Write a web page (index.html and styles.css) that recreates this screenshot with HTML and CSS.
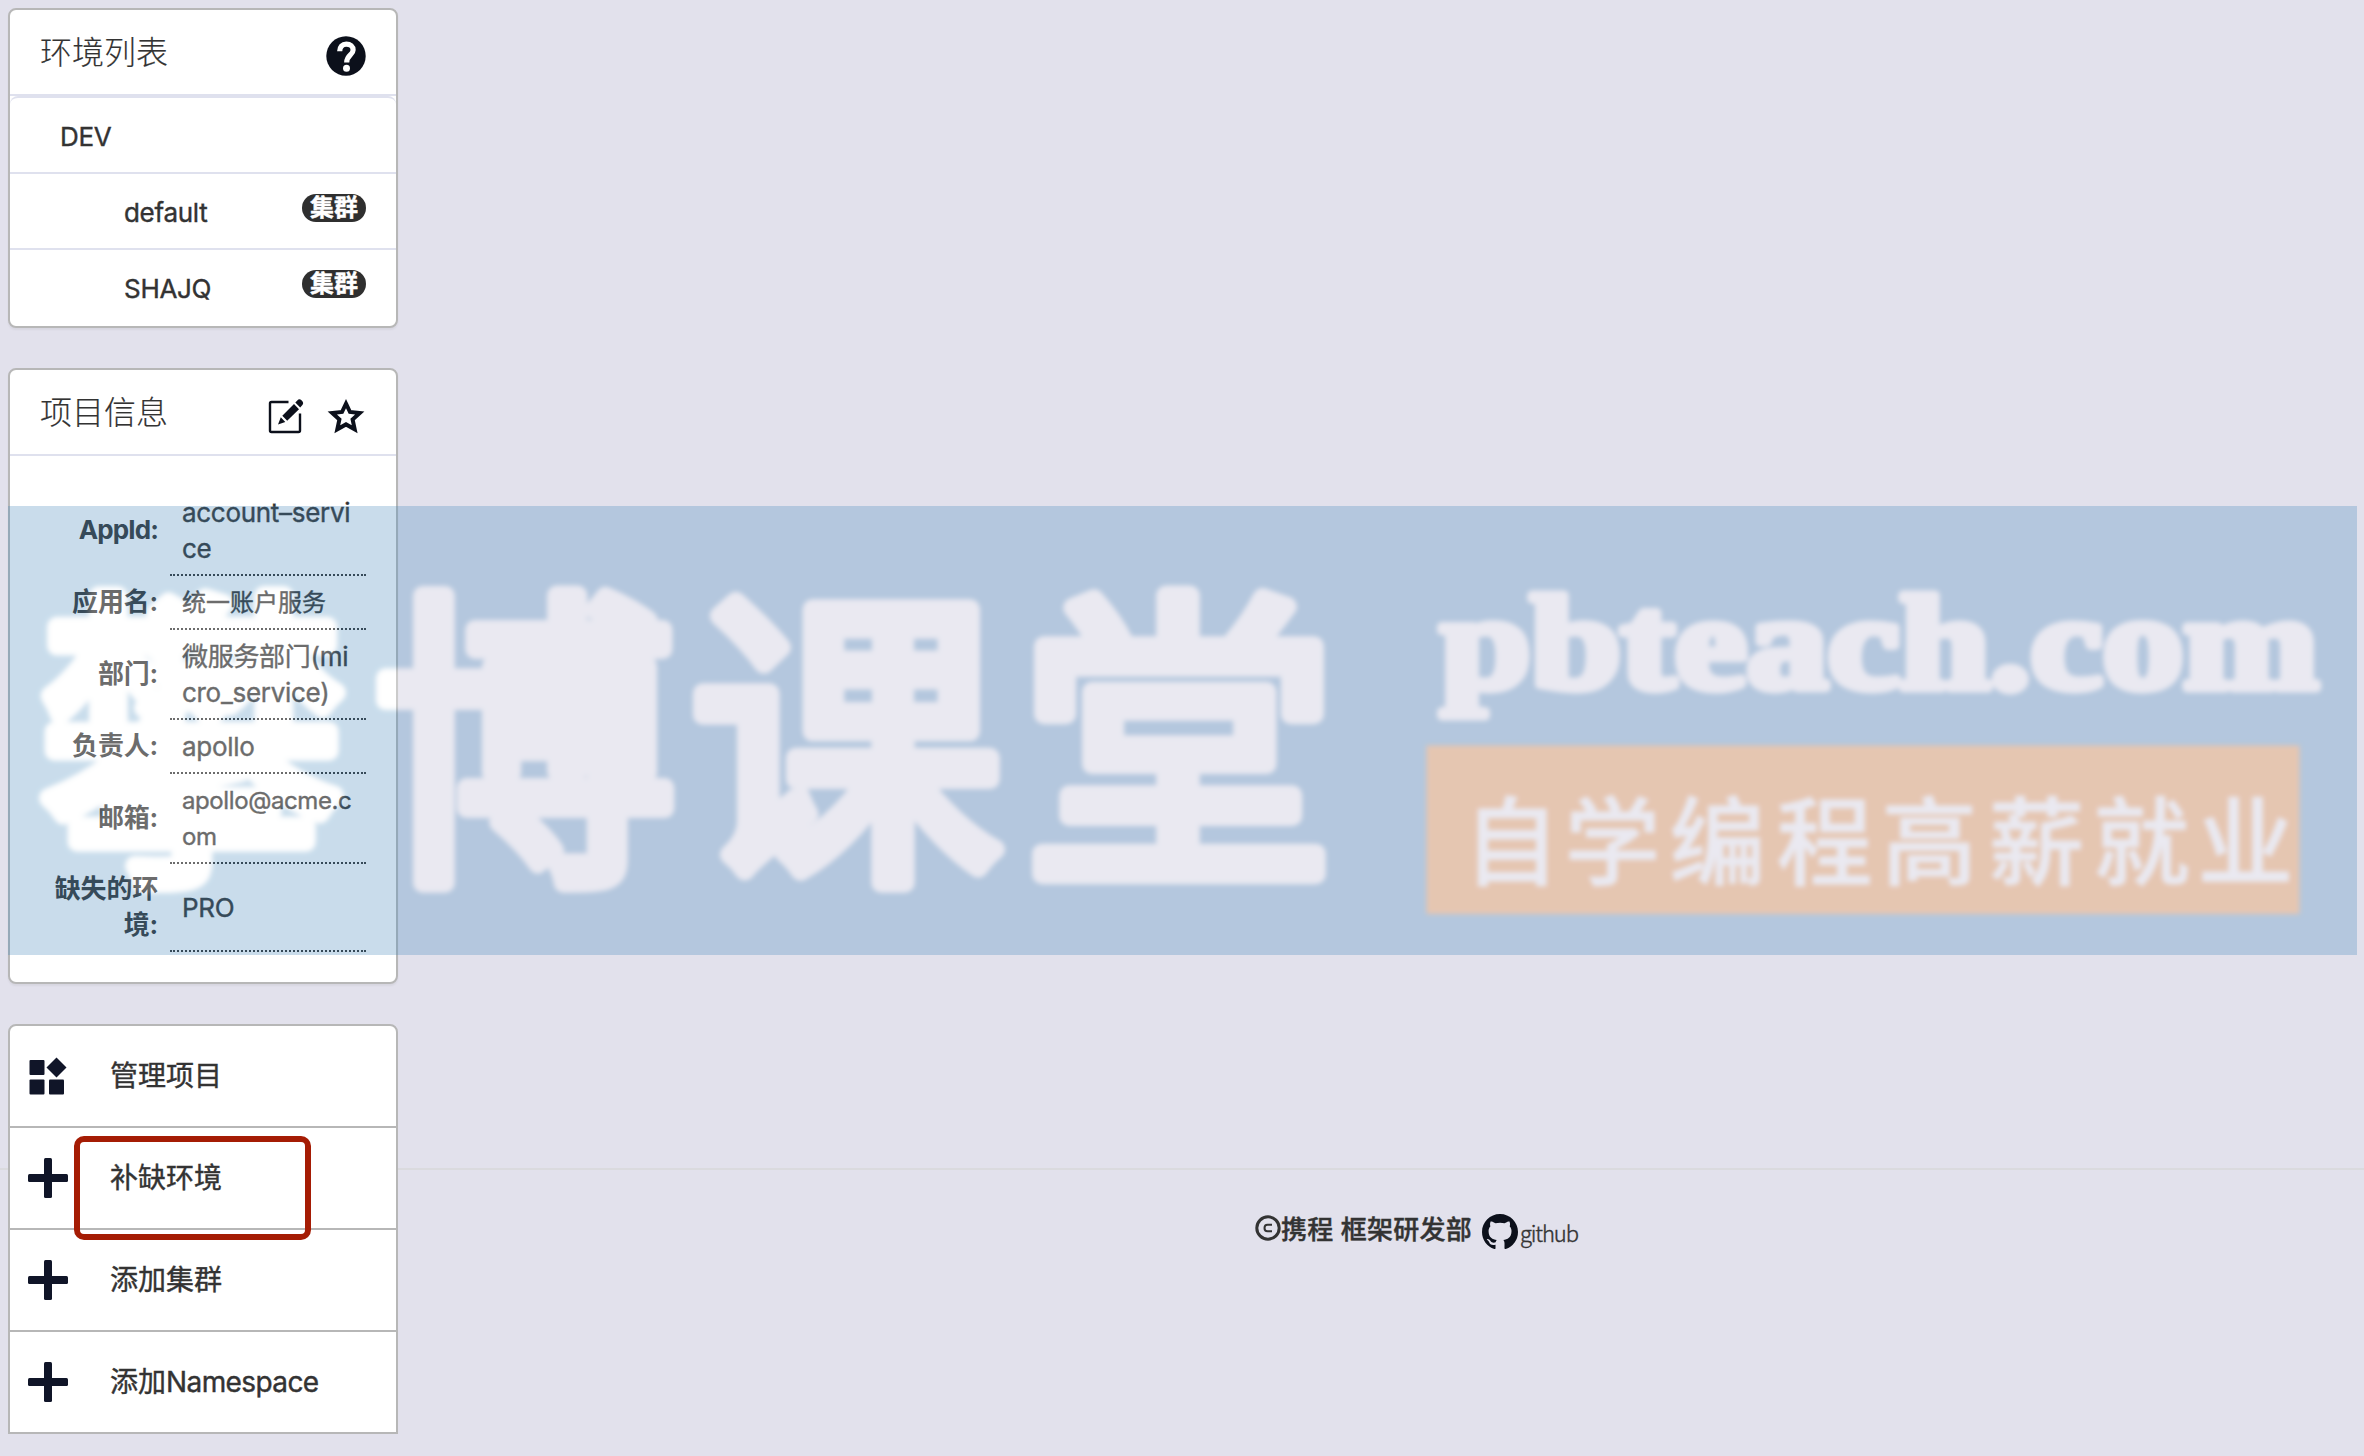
FILE: index.html
```html
<!DOCTYPE html>
<html lang="zh-CN">
<head>
<meta charset="utf-8">
<title>Apollo</title>
<link rel="stylesheet" href="styles.css">
</head>
<body>
<main class="sidebar">
  <section class="panel env">
    <header class="panel-head">
      <h2>环境列表</h2>
      <svg class="help" width="40" height="40" viewBox="0 0 40 40"><circle cx="20" cy="20" r="19.7" fill="#0c101b"/><path d="M13.700 15.200C13.800 10.800 16.300 8.100 20.300 8.100C24.400 8.100 27.100 10.400 27.100 14C27.100 19.200 20.800 19 20.700 26.500" fill="none" stroke="#fff" stroke-width="5.200"/><circle cx="20.500" cy="32.200" r="3.500" fill="#fff"/></svg>
    </header>
    <ul class="tree">
      <li class="node">DEV</li>
      <li class="node child"><span>default</span><span class="badge">集群</span></li>
      <li class="node child"><span>SHAJQ</span><span class="badge">集群</span></li>
    </ul>
  </section>

  <section class="panel info">
    <header class="panel-head">
      <h2>项目信息</h2>
      <span class="actions">
        <svg width="36" height="36" viewBox="0 0 36 36"><path d="M20.500 4H3.500Q2 4 2 5.500V32.500Q2 34 3.500 34H30.500Q32 34 32 32.500V15.500" fill="none" stroke="#0c101b" stroke-width="2.400"/><path d="M10 26.500L12.800 19.300L17.300 24.100ZM14.300 17.800L26 6.100L31 11.200L19.200 22.800ZM27.300 4.500L29.300 2.400Q31.300.300 33.500 2.300Q36.300 4.600 34.400 7L32.200 9.400Z" fill="#0c101b"/></svg>
        <svg width="40" height="36" viewBox="0 0 40 36"><path d="M20 5.600L24 14L33.700 15L26.600 21.400L28.700 31.300L20 26.400L11.300 31.300L13.400 21.400L6.300 15L16 14Z" fill="none" stroke="#0c101b" stroke-width="4"/></svg>
      </span>
    </header>
    <dl class="facts">
      <dt class="tight">AppId:</dt><dd>account–service</dd>
      <dt>应用名:</dt><dd class="small">统一账户服务</dd>
      <dt>部门:</dt><dd>微服务部门(micro_service)</dd>
      <dt>负责人:</dt><dd>apollo</dd>
      <dt>邮箱:</dt><dd class="small email">apollo@acme.com</dd>
      <dt>缺失的环境:</dt><dd>PRO</dd>
    </dl>
  </section>

  <nav class="menu">
    <a class="item"><svg width="40" height="40" viewBox="0 0 40 40" fill="#101528"><rect x="1.500" y="4" width="15" height="15" rx="1"/><rect x="1.500" y="23.500" width="15" height="15" rx="1"/><rect x="21" y="23.500" width="15" height="15" rx="1"/><path d="M28.500 1.500L38.500 11.500L28.500 21.500L18.500 11.500Z"/></svg><span>管理项目</span></a>
    <a class="item"><svg width="40" height="40" viewBox="0 0 40 40" fill="#101528"><rect x="0" y="16" width="40" height="8" rx="1.500"/><rect x="16" y="0" width="8" height="40" rx="1.500"/></svg><span>补缺环境</span><i class="highlight"></i></a>
    <a class="item"><svg width="40" height="40" viewBox="0 0 40 40" fill="#101528"><rect x="0" y="16" width="40" height="8" rx="1.500"/><rect x="16" y="0" width="8" height="40" rx="1.500"/></svg><span>添加集群</span></a>
    <a class="item"><svg width="40" height="40" viewBox="0 0 40 40" fill="#101528"><rect x="0" y="16" width="40" height="8" rx="1.500"/><rect x="16" y="0" width="8" height="40" rx="1.500"/></svg><span>添加<span class="latin">Namespace</span></span></a>
  </nav>
</main>

<footer class="footer">
  <svg class="copy" width="26" height="26" viewBox="0 0 26 26" fill="none" stroke="#333"><circle cx="13" cy="13" r="11.200" stroke-width="3"/><path d="M17 9.700H12.500Q9.500 9.700 9.500 13Q9.500 16.300 12.500 16.300H17" stroke-width="2"/></svg>
  <span class="owner">携程 框架研发部</span>
  <svg class="mark" width="36" height="36" viewBox="0 0 16 16" fill="#0c101b"><path d="M8 0C3.580 0 0 3.580 0 8c0 3.540 2.290 6.530 5.470 7.590.400.070.550-.170.550-.380 0-.190-.010-.820-.010-1.490-2.010.370-2.530-.490-2.690-.940-.090-.230-.480-.940-.820-1.130-.280-.150-.680-.520-.010-.530.630-.010 1.080.580 1.230.820.720 1.210 1.870.870 2.330.660.070-.520.280-.870.510-1.070-1.780-.200-3.640-.890-3.640-3.950 0-.870.310-1.590.820-2.150-.080-.200-.360-1.020.080-2.120 0 0 .670-.210 2.200.820.640-.180 1.320-.270 2-.270s1.360.090 2 .270c1.530-1.040 2.200-.820 2.200-.820.440 1.100.160 1.920.080 2.120.510.560.820 1.270.820 2.150 0 3.070-1.870 3.750-3.650 3.950.290.250.540.730.540 1.480 0 1.070-.010 1.930-.010 2.200 0 .210.150.460.550.380A8.010 8.010 0 0 0 16 8c0-4.420-3.580-8-8-8Z"/></svg>
  <span class="gh">github</span>
</footer>

<svg class="watermark" width="2349" height="449" viewBox="7.500 506 2349 449">
  <defs><filter id="soft" x="-5%" y="-5%" width="110%" height="110%"><feGaussianBlur stdDeviation="2.500"/></filter></defs>
  <rect x="7.500" y="506" width="2349" height="449" fill="#3f86bb"/>
  <rect x="1426" y="745.500" width="873" height="168.500" fill="#f0811d" filter="url(#soft)"/>
  <g class="wm-main" filter="url(#soft)">
    <text x="38" y="858" textLength="306" lengthAdjust="spacingAndGlyphs">攀</text>
    <text x="373" y="858" textLength="302" lengthAdjust="spacingAndGlyphs">博</text>
    <text x="689" y="858" textLength="314" lengthAdjust="spacingAndGlyphs">课</text>
    <text x="1021" y="858" textLength="314" lengthAdjust="spacingAndGlyphs">堂</text>
  </g>
  <text class="wm-site" x="1440" y="688" textLength="878" lengthAdjust="spacingAndGlyphs" filter="url(#soft)">pbteach.com</text>
  <text class="wm-slogan" x="1463 1564 1669 1776 1881 1988 2093 2197" y="877" filter="url(#soft)">自学编程高薪就业</text>
</svg>
</body>
</html>
```
FILE: styles.css
```css
* { box-sizing: border-box; }
body {
  margin: 0;
  height: 1456px;
  display: grid;
  overflow: hidden;
  position: relative;
  background: #e2e1ec;
  color: #333;
  font: 26px/36px Inter, "Noto Sans CJK SC", sans-serif;
  letter-spacing: -0.3px;
  -webkit-text-stroke: .4px currentColor;
}
svg { display: block; flex: none; }

.sidebar {
  grid-area: 1 / 1;
  z-index: 1;
  width: 398px;
  padding: 8px 0 0 8px;
  display: flex;
  flex-direction: column;
  gap: 40px;
}
.panel {
  background: #fff;
  border: 2px solid #b7b7b7;
  border-radius: 8px;
  box-shadow: 0 2px 2px rgba(0, 0, 0, .05);
}
.env { height: 320px; }
.info { height: 616px; }
.panel-head {
  height: 86px;
  padding: 0 30px;
  display: flex;
  justify-content: space-between;
  border-bottom: 2px solid #dfe1ee;
}
.panel-head h2 {
  margin: 0;
  font-size: 32px;
  font-weight: 300;
  line-height: 86px;
  letter-spacing: 0;
  -webkit-text-stroke-width: .15px;
}
.help { margin-top: 26px; }
.actions { display: flex; gap: 22px; margin-top: 28px; }

.tree { list-style: none; margin: 0; padding: 0; border-top: 2px solid #dfe1ee; border-radius: 8px; }
.node {
  height: 76px;
  padding: 2px 30px 0 50px;
  line-height: 74px;
  display: flex;
  justify-content: space-between;
  border-bottom: 2px solid #dfe1ee;
}
.node:last-child { border-bottom: 0; }
.child { padding-left: 114px; }
.badge {
  margin-top: 18px;
  width: 64px;
  height: 28px;
  border-radius: 14px;
  background: #2f2f2f;
  color: #fff;
  font-size: 24px;
  font-weight: 700;
  line-height: 27px;
  text-align: center;
  letter-spacing: 0;
}

.facts {
  margin: 30px 30px 0;
  display: grid;
  grid-template-columns: 130px 196px;
  grid-template-rows: 90px 54px 90px 54px 90px 88px;
}
.facts dt {
  width: 118px;
  padding-bottom: 2px;
  align-self: center;
  font-weight: 700;
  text-align: right;
  letter-spacing: -.2px;
  -webkit-text-stroke: 0;
}
.facts .tight { letter-spacing: -.9px; }
.facts dd {
  margin: 0;
  padding: 2px 12px 0;
  display: flex;
  align-items: center;
  word-break: break-all;
  border-bottom: 2px dotted #333;
}
.facts .small { font-size: 24px; letter-spacing: 0; }
.facts .email { letter-spacing: -.4px; padding-right: 10px; }

.menu {
  background: #fff;
  border: 2px solid #b7b7b7;
  border-radius: 8px 8px 0 0;
}
.item {
  position: relative;
  height: 102px;
  padding: 0 0 0 18px;
  display: flex;
  align-items: center;
  gap: 42px;
  font-size: 28px;
  letter-spacing: 0;
  border-bottom: 2px solid #b7b7b7;
}
.item:last-child { border-bottom: 0; height: 100px; }
.latin { letter-spacing: -.6px; }
.highlight {
  position: absolute;
  left: 64px;
  top: 8px;
  width: 237px;
  height: 104px;
  border: 6px solid #a51c04;
  border-radius: 10px;
  z-index: 2;
}

.footer {
  grid-area: 1 / 1;
  margin-top: 1168px;
  padding: 44px 0 0 1255px;
  display: flex;
  align-items: flex-start;
  border-top: 2px solid #dadade;
}
.copy { margin-top: 1px; }
.owner { font-weight: 500; letter-spacing: 0.25px; margin-right: 10px; white-space: pre; line-height: 32px; }
.gh { margin-left: 2px; font: 300 22px/37px "Noto Sans CJK SC", sans-serif; letter-spacing: -1.1px; }

.watermark {
  position: absolute;
  left: 7.5px;
  top: 506px;
  z-index: 3;
  opacity: .28;
  pointer-events: none;
  letter-spacing: 0;
}
.watermark text { fill: #fff; stroke: #fff; stroke-linejoin: round; -webkit-text-stroke: 0; font-family: "Noto Sans CJK SC", sans-serif; }
.watermark .wm-main text { font-size: 312px; font-weight: 400; stroke-width: 20px; }
.watermark .wm-site { font-family: "Liberation Serif", serif; font-size: 134px; font-weight: 700; stroke-width: 9px; }
.watermark .wm-slogan { font-size: 96px; font-weight: 500; stroke-width: 1px; }
```
